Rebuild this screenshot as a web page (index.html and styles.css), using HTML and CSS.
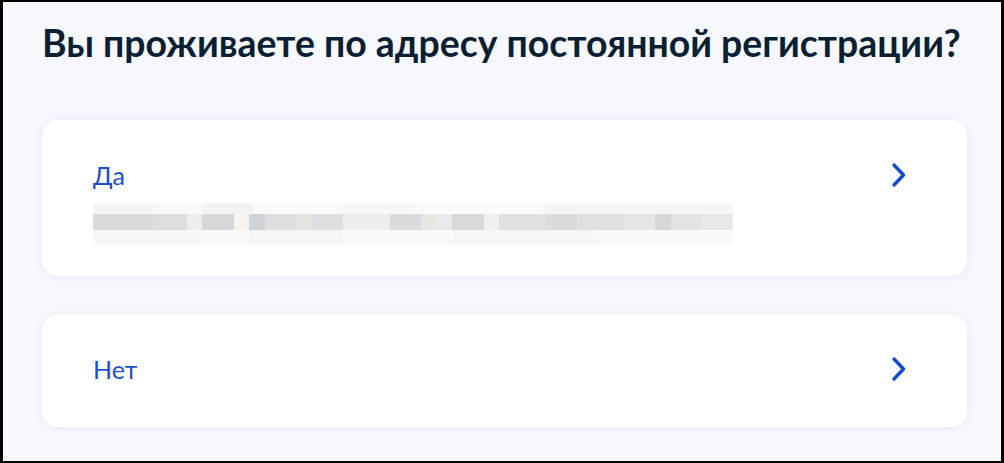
FILE: index.html
```html
<!DOCTYPE html>
<html lang="ru">
<head>
    <meta charset="UTF-8">
    <meta name="viewport" content="width=device-width, initial-scale=1.0">
    <title>Адрес регистрации</title>
    <link rel="stylesheet" href="styles.css">
</head>
<body>
    <div class="screen">
        <h1 class="question">Вы проживаете по адресу постоянной регистрации?</h1>

        <div class="answers">
            <a class="answer answer-address" href="#">
                <div class="answer-body">
                    <div class="answer-title">Да</div>
                    <div class="redacted">
                        <div class="redacted-row row-top"></div>
                        <div class="redacted-row row-mid"></div>
                        <div class="redacted-row row-bottom"></div>
                    </div>
                </div>
                <svg class="chevron" viewBox="0 0 16 26" width="16" height="26">
                    <path d="M3 3 L12.5 13 L3 23" fill="none" stroke="#0d4cd3" stroke-width="3.4" stroke-linecap="round" stroke-linejoin="round"/>
                </svg>
            </a>

            <a class="answer answer-plain" href="#">
                <div class="answer-body">
                    <div class="answer-title">Нет</div>
                </div>
                <svg class="chevron" viewBox="0 0 16 26" width="16" height="26">
                    <path d="M3 3 L12.5 13 L3 23" fill="none" stroke="#0d4cd3" stroke-width="3.4" stroke-linecap="round" stroke-linejoin="round"/>
                </svg>
            </a>
        </div>
    </div>
</body>
</html>
```

FILE: styles.css
```css
html, body {
    margin: 0;
    padding: 0;
}
body {
    font-family: Lato, "Noto Sans", sans-serif;
    background-color: #000;
}
.screen {
    box-sizing: border-box;
    width: 1004px;
    height: 463px;
    border: 2px solid #000;
    border-left-width: 3px;
    border-right-width: 3px;
    background-color: #f6f8fd;
    padding: 19px 34px 0 39px;
    overflow: hidden;
}
.question {
    margin: 0;
    font-size: 37.4px;
    line-height: 44px;
    font-weight: 700;
    color: #0b1f33;
    white-space: nowrap;
}
.answers {
    display: flex;
    flex-direction: column;
    gap: 38px;
    margin-top: 55px;
}
.answer {
    display: flex;
    justify-content: space-between;
    background: #fff;
    border-radius: 16px;
    box-shadow: 0 1px 10px rgba(60, 90, 170, 0.09);
    text-decoration: none;
}
.answer-address {
    align-items: flex-start;
    padding: 41px 60px 31px 51px;
}
.answer-address .chevron {
    margin-top: 1px;
}
.answer-plain {
    align-items: center;
    padding: 41px 60px 44px 51px;
}
.answer-title {
    font-size: 25px;
    line-height: 28px;
    color: #1a4fd6;
}
.redacted {
    width: 640px;
    margin-top: 14px;
}
.row-top {
    height: 11px;
    background: linear-gradient(to right,
        #f4f5f6 0 60px, #f9f9f9 60px 110px, #f3f4f5 110px 160px, #fafafa 160px 250px,
        #f6f7f7 250px 320px, #fbfbfb 320px 450px, #f4f5f5 450px 560px, #f6f6f7 560px 640px);
}
.row-mid {
    height: 16px;
    background: linear-gradient(to right,
        #d9dbde 0 62px, #dcdee1 62px 94px, #eceef0 94px 109px, #d5d7da 109px 141px,
        #f4f4f3 141px 156px, #cfd2d6 156px 172px, #dde0e2 172px 203px, #e2e3e3 203px 219px,
        #dde0e2 219px 250px, #eceeef 250px 297px, #d9dbde 297px 328px, #e6e7e7 328px 344px,
        #e9ecef 344px 359px, #d7d9dc 359px 391px, #eef1f4 391px 406px, #dfe0e2 406px 453px,
        #d9dcde 453px 484px, #dee0e2 484px 531px, #e5e6e8 531px 562px, #d5d8db 562px 578px,
        #e1e3e6 578px 609px, #e7e9eb 609px 640px);
}
.row-bottom {
    height: 15px;
    background: linear-gradient(to right,
        #f6f7f7 0 110px, #fafafa 110px 156px, #f5f6f6 156px 250px, #fafafa 250px 360px,
        #f6f6f7 360px 500px, #f9f9fa 500px 640px);
}
.chevron {
    flex-shrink: 0;
    display: block;
}
```
